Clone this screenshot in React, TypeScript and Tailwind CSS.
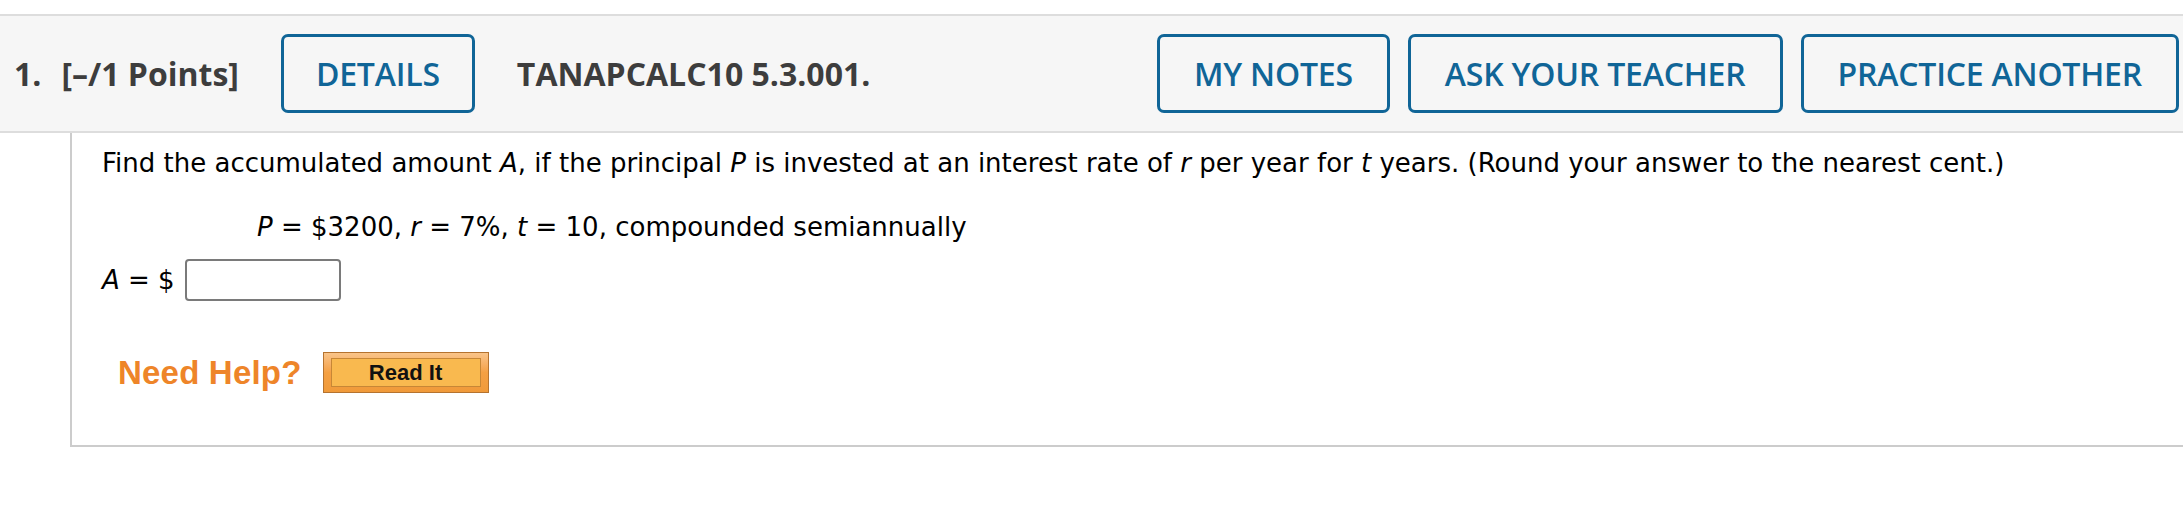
const headFont = { fontFamily: '"Open Sans", "Liberation Sans", sans-serif' };

function OutlineButton({ label, wide = true }: { label: string; wide?: boolean }) {
  return (
    <button
      className={
        wide
          ? "h-[79px] px-[34px] rounded-[7px] border-[3px] border-[#106597] bg-[#f6f6f6] text-[32px] font-semibold text-[#106597] tracking-[-0.2px] leading-none"
          : "h-[79px] px-[32px] rounded-[7px] border-[3px] border-[#106597] bg-[#f6f6f6] text-[32px] font-semibold text-[#106597] tracking-[-0.2px] leading-none"
      }
    >
      {label}
    </button>
  );
}

export default function App() {
  return (
    <div className="w-full h-[506px] bg-white pt-[14px]">
      {/* question header */}
      <div
        className="flex items-center h-[119px] border-t-2 border-b-2 border-[#dddddd] bg-[#f6f6f6] pl-[14px] pr-[4px] text-[#3d3d3d]"
        style={headFont}
      >
        <span className="text-[32px] font-bold">1.</span>
        <span className="ml-[20px] text-[32px] font-bold">[–/1 Points]</span>
        <div className="ml-[42px]">
          <OutlineButton label="DETAILS" wide={false} />
        </div>
        <span className="ml-[42px] text-[32px] font-bold">TANAPCALC10 5.3.001.</span>
        <div className="flex-1" />
        <div className="flex gap-[18px]">
          <OutlineButton label="MY NOTES" />
          <OutlineButton label="ASK YOUR TEACHER" />
          <OutlineButton label="PRACTICE ANOTHER" />
        </div>
      </div>

      {/* question body */}
      <div
        className="ml-[70px] h-[314px] border-l-2 border-b-2 border-[#cccccc] pl-[30px] pt-[12px] text-[26px] leading-[36px] text-black"
        style={{ fontFamily: '"DejaVu Sans", Verdana, sans-serif' }}
      >
        <p className="whitespace-nowrap">
          Find the accumulated amount <i>A</i>, if the principal <i>P</i> is invested at an interest rate of{" "}
          <i>r</i> per year for <i>t</i> years. (Round your answer to the nearest cent.)
        </p>
        <p className="mt-[28px] ml-[155px]">
          <i>P</i> = $3200, <i>r</i> = 7%, <i>t</i> = 10, compounded semiannually
        </p>
        <div className="mt-[14px] flex items-center gap-[10px]">
          <span>
            <i>A</i> = $
          </span>
          <input
            type="text"
            className="w-[156px] h-[42px] rounded-[4px] border-2 border-[#7a7a7a] bg-white"
          />
        </div>
        <div className="mt-[51px] ml-[16px] flex items-center gap-[21px]">
          <span
            className="text-[33px] font-bold text-[#ee8529] leading-none tracking-[0.2px]"
            style={{ fontFamily: '"Liberation Sans", Arial, sans-serif' }}
          >
            Need Help?
          </span>
          <button className="w-[166px] h-[41px] border border-[#b5732f] bg-gradient-to-b from-[#f9c489] via-[#f4a043] to-[#f09a3a] px-[7px] py-[5px]">
            <div
              className="h-full w-full border border-[#c78736] bg-[#f9b94f] flex items-center justify-center text-[22px] font-bold text-[#111111] leading-none"
              style={{ fontFamily: '"Liberation Sans", Arial, sans-serif' }}
            >
              Read It
            </div>
          </button>
        </div>
      </div>
    </div>
  );
}
